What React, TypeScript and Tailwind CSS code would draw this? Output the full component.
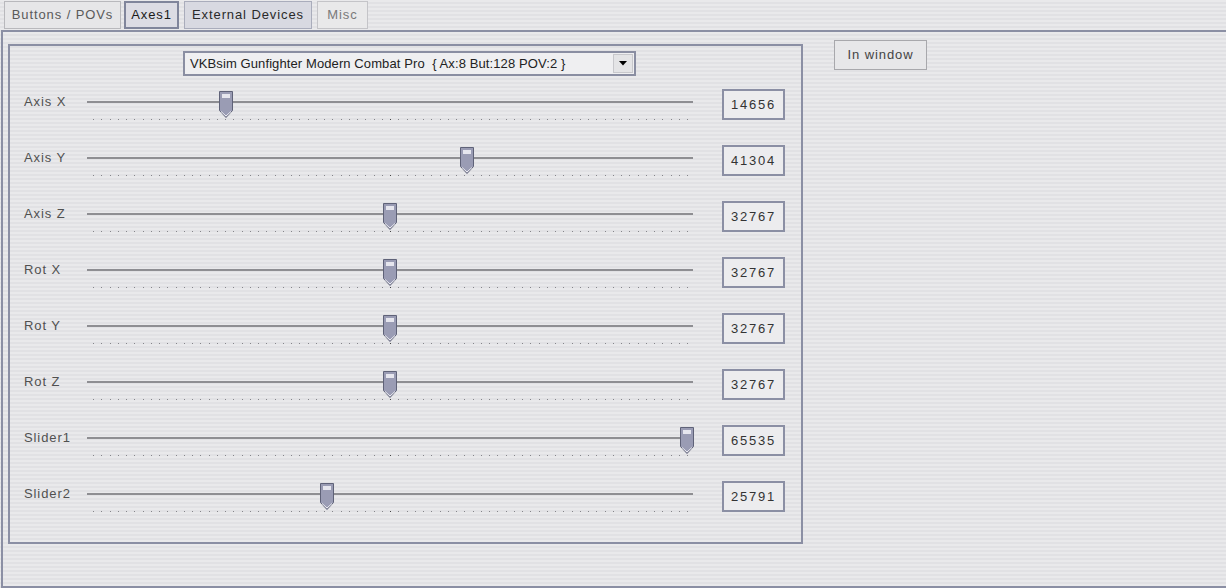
const axes = [
  { label: 'Axis X', value: 14656 },
  { label: 'Axis Y', value: 41304 },
  { label: 'Axis Z', value: 32767 },
  { label: 'Rot X', value: 32767 },
  { label: 'Rot Y', value: 32767 },
  { label: 'Rot Z', value: 32767 },
  { label: 'Slider1', value: 65535 },
  { label: 'Slider2', value: 25791 },
]

const ticks = Array.from({ length: 73 }, (_, i) => i)

function Thumb() {
  return (
    <svg width="14" height="28" viewBox="0 0 14 28">
      <path d="M0.5 0.5H13.5V19.5L7 26.5L0.5 19.5Z" fill="#9a9cb4" stroke="#5f6278" />
      <rect x="3" y="3" width="8" height="4" fill="#e6e6ee" />
      <path d="M2 20.5L7 25L12 20.5" fill="none" stroke="#eeeef4" />
    </svg>
  )
}

function AxisSlider({ value }: { value: number }) {
  const left = 6 + (594 * value) / 65535 - 7
  return (
    <div className="relative h-[56px] w-[606px]">
      <div className="mt-[24px] h-[2px] w-full bg-[#8e8e92]" />
      <svg className="mt-[16px] block" width="606" height="2">
        {ticks.map((i) => (
          <rect
            key={i}
            x={Math.round(6 + i * 8.25)}
            y={0}
            width={1}
            height={1}
            fill={i === 36 ? '#444' : '#85858a'}
          />
        ))}
      </svg>
      <div className="absolute top-[14px]" style={{ left }}>
        <Thumb />
      </div>
    </div>
  )
}

export default function App() {
  return (
    <div className="h-[588px] w-[1226px] overflow-hidden bg-[repeating-linear-gradient(to_bottom,#e9e9eb_0px,#e9e9eb_2px,#e1e1e4_2px,#e1e1e4_4px)] font-['Liberation_Sans',Arial,sans-serif] text-[13px] tracking-[0.9px] text-[#505050]">
      <div className="flex h-[30px] pl-[4px] pt-[1px]">
        <div className="flex h-[28px] w-[117px] items-center justify-center border border-[#b8b8bc] bg-[#e6e6e8] text-[#5a5a5a]">
          Buttons / POVs
        </div>
        <div className="ml-[3px] flex h-[28px] w-[55px] items-center justify-center border-2 border-[#80859b] bg-[#dcdce4] text-[#1a1a1a]">
          Axes1
        </div>
        <div className="ml-[5px] flex h-[28px] w-[128px] items-center justify-center border border-[#a9acbb] bg-[#d8d9e1] text-[#2a2a2a]">
          External Devices
        </div>
        <div className="ml-[5px] flex h-[28px] w-[51px] items-center justify-center border border-[#c4c4c8] bg-[#e9e9ea] text-[#7a7a7a]">
          Misc
        </div>
      </div>

      <div className="ml-[1px] flex h-[558px] items-start border-2 border-r-0 border-[#8b8fa4] pl-[5px] pt-[8px]">
        <div className="mt-[4px] h-[500px] w-[795px] border-2 border-[#8b8fa4]">
          <div className="mb-[1px] ml-[173px] mt-[5px] flex h-[25px] w-[453px] items-center border-2 border-[#8a8ea2] bg-[#efeff1] pl-[5px] tracking-[0.1px] text-[#222]">
            <span className="flex-1">VKBsim Gunfighter Modern Combat Pro&nbsp; {'{'} Ax:8 But:128 POV:2 {'}'}</span>
            <div className="mr-[1px] flex h-[19px] w-[20px] items-center justify-center border border-[#c8c8cc] bg-[#e4e4e6]">
              <svg width="8" height="5" viewBox="0 0 8 5">
                <path d="M0 0H8L4 4.5Z" fill="#000" />
              </svg>
            </div>
          </div>

          {axes.map((a) => (
            <div key={a.label} className="flex h-[56px]">
              <div className="ml-[14px] w-[63px] pt-[17px] leading-[16px]">{a.label}</div>
              <AxisSlider value={a.value} />
              <div className="ml-[29px] mt-[12px] flex h-[31px] w-[63px] items-center justify-center border-2 border-[#8b8fa4] bg-[#ececee] tracking-[1.8px] text-[#333]">
                {a.value}
              </div>
            </div>
          ))}
        </div>

        <div className="ml-[31px] flex h-[30px] w-[93px] items-center justify-center border border-[#a8a8ac] bg-[#e7e7e9] text-[#444]">
          In window
        </div>
      </div>
    </div>
  )
}
